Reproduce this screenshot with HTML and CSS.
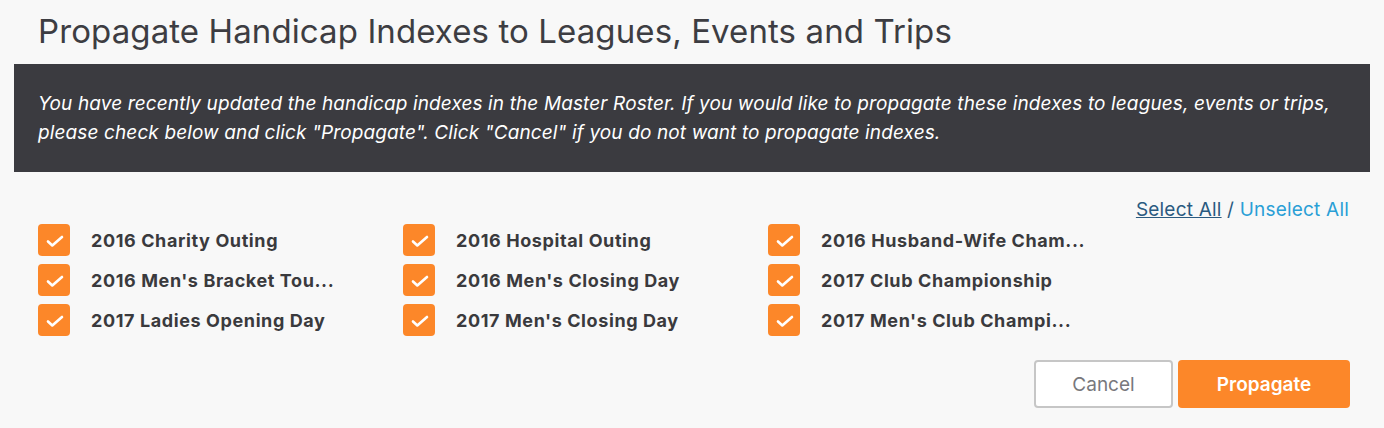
FILE: index.html
```html
<!DOCTYPE html>
<html lang="en">
<head>
    <meta charset="UTF-8">
    <title>Propagate Handicap Indexes</title>
    <link rel="stylesheet" href="styles.css">
</head>
<body>

<div class="modal">
    <h1 class="modal-title">Propagate Handicap Indexes to Leagues, Events and Trips</h1>

    <!-- notice -->
    <div class="notice">
        You have recently updated the handicap indexes in the Master Roster. If you would like to propagate these indexes to leagues, events or trips,
        please check below and click "Propagate". Click "Cancel" if you do not want to propagate indexes.
    </div>

    <div class="select-links">
        <a href="#" class="select-all">Select All</a> / <a href="#" class="unselect-all">Unselect All</a>
    </div>

    <!-- events -->
    <div class="event-grid">
        <label class="event"><span class="check"><svg viewBox="0 0 32 32"><path d="M10 17.5l4.3 4 9.7-8.5"/></svg></span><span class="event-name">2016 Charity Outing</span></label>
        <label class="event"><span class="check"><svg viewBox="0 0 32 32"><path d="M10 17.5l4.3 4 9.7-8.5"/></svg></span><span class="event-name">2016 Hospital Outing</span></label>
        <label class="event"><span class="check"><svg viewBox="0 0 32 32"><path d="M10 17.5l4.3 4 9.7-8.5"/></svg></span><span class="event-name">2016 Husband-Wife Cham...</span></label>
        <label class="event"><span class="check"><svg viewBox="0 0 32 32"><path d="M10 17.5l4.3 4 9.7-8.5"/></svg></span><span class="event-name">2016 Men's Bracket Tou...</span></label>
        <label class="event"><span class="check"><svg viewBox="0 0 32 32"><path d="M10 17.5l4.3 4 9.7-8.5"/></svg></span><span class="event-name">2016 Men's Closing Day</span></label>
        <label class="event"><span class="check"><svg viewBox="0 0 32 32"><path d="M10 17.5l4.3 4 9.7-8.5"/></svg></span><span class="event-name">2017 Club Championship</span></label>
        <label class="event"><span class="check"><svg viewBox="0 0 32 32"><path d="M10 17.5l4.3 4 9.7-8.5"/></svg></span><span class="event-name">2017 Ladies Opening Day</span></label>
        <label class="event"><span class="check"><svg viewBox="0 0 32 32"><path d="M10 17.5l4.3 4 9.7-8.5"/></svg></span><span class="event-name">2017 Men's Closing Day</span></label>
        <label class="event"><span class="check"><svg viewBox="0 0 32 32"><path d="M10 17.5l4.3 4 9.7-8.5"/></svg></span><span class="event-name">2017 Men's Club Champi...</span></label>
    </div>

    <div class="actions">
        <button class="btn btn-cancel">Cancel</button>
        <button class="btn btn-propagate">Propagate</button>
    </div>
</div>

</body>
</html>
```

FILE: styles.css
```css
body {
    margin: 0;
    background-color: #f8f8f8;
    font-family: Inter, "Open Sans", Arial, sans-serif;
    color: #3a3a3d;
}

.modal {
    padding: 0 14px;
}

.modal-title {
    margin: 0;
    padding: 13px 24px 0;
    height: 51px;
    font-size: 33px;
    font-weight: 400;
    line-height: 36px;
    letter-spacing: 0.1px;
    color: #3d3d42;
}

.notice {
    background-color: #3b3b40;
    color: #fff;
    font-style: italic;
    font-size: 19px;
    line-height: 29px;
    letter-spacing: 0.12px;
    padding: 25px 24px 25px;
    height: 58px;
}

.select-links {
    margin-top: 27px;
    padding-right: 21px;
    text-align: right;
    font-size: 19px;
    line-height: 22px;
    letter-spacing: 0.2px;
    color: #2a5a80;
}

.select-links a {
    color: #2a9fd6;
    text-decoration: none;
}

.select-links .select-all {
    color: #2a5a80;
    text-decoration: underline;
}

.event-grid {
    display: grid;
    grid-template-columns: 365px 365px 365px;
    row-gap: 8px;
    padding: 3px 24px 0;
}

.event {
    display: flex;
    align-items: center;
    height: 32px;
}

.check {
    width: 32px;
    height: 32px;
    border-radius: 4px;
    background-color: #fc8729;
    flex-shrink: 0;
}

.check svg {
    display: block;
    width: 32px;
    height: 32px;
    fill: none;
    stroke: #fff;
    stroke-width: 2.6;
    stroke-linecap: round;
    stroke-linejoin: round;
}

.event-name {
    margin-left: 21px;
    font-size: 18px;
    font-weight: 700;
    letter-spacing: 0.6px;
    color: #3a3a3d;
    white-space: nowrap;
}

.actions {
    display: flex;
    justify-content: flex-end;
    gap: 5px;
    padding: 24px 20px 0;
}

.btn {
    height: 48px;
    border-radius: 4px;
    font-family: inherit;
    font-size: 19px;
    cursor: pointer;
}

.btn-cancel {
    width: 139px;
    background-color: #fff;
    border: 2px solid #c6c6c6;
    color: #78787c;
}

.btn-propagate {
    width: 172px;
    background-color: #fc8729;
    border: none;
    color: #fff;
    font-weight: 600;
}
```
